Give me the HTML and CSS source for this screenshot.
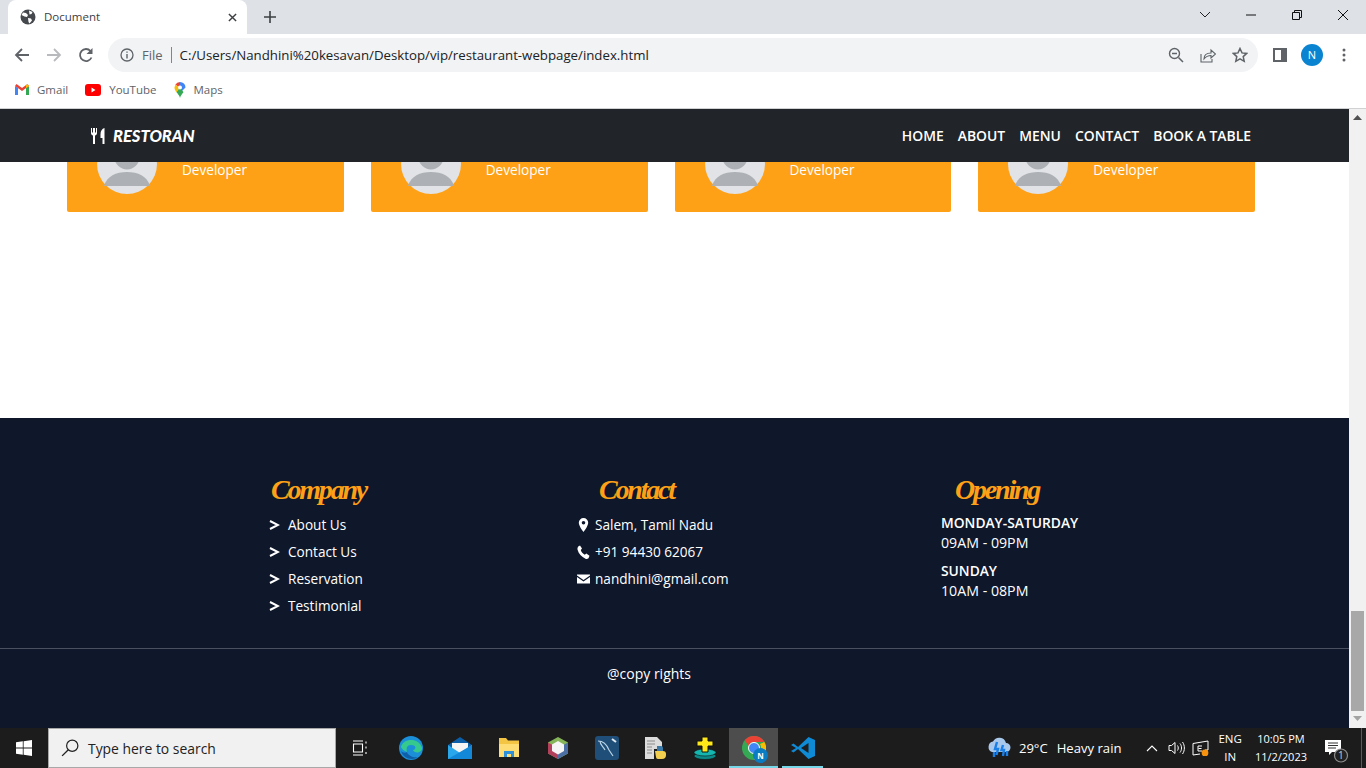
FILE: index.html
```html
<!DOCTYPE html>
<html lang="en">
<head>
    <meta charset="UTF-8">
    <title>Document</title>
    <link rel="stylesheet" href="styles.css">
</head>
<body>
    <div class="tabstrip">
        <div class="tab">
            <svg class="tab-icon" viewBox="0 0 16 16"><circle cx="8" cy="8" r="7.5" fill="#45494d"/><path d="M3 3.5l3 .5 2 2-1 2-2.5-.5L1.500 6zM9 1.500l3.500 1.500-1 2-2 .5zM8 9l3 .5 1 2-2.500 3-1-1.500z" fill="#fff"/></svg>
            <span class="tab-title">Document</span>
            <svg class="tab-close" viewBox="0 0 10 10"><path d="M1 1l8 8M9 1l-8 8" stroke="#3c4043" stroke-width="1.6"/></svg>
        </div>
        <svg class="new-tab" viewBox="0 0 12 12"><path d="M6 0v12M0 6h12" stroke="#3c4043" stroke-width="1.6"/></svg>
        <div class="window-btns">
            <svg class="win-chevron" viewBox="0 0 12 8"><path d="M1 1l5 5 5-5" fill="none" stroke="#222" stroke-width="1"/></svg>
            <svg class="win-btn" viewBox="0 0 12 12"><path d="M1 6h10" stroke="#111" stroke-width="1"/></svg>
            <svg class="win-btn" viewBox="0 0 12 12"><path d="M1.5 3.5h7v7h-7zM3.500 3.500v-2h7v7h-2" fill="none" stroke="#111" stroke-width="1"/></svg>
            <svg class="win-btn" viewBox="0 0 12 12"><path d="M1 1l10 10M11 1L1 11" stroke="#111" stroke-width="1"/></svg>
        </div>
    </div>

    <div class="toolbar">
        <svg class="nav-icon" viewBox="0 0 16 16"><path d="M15 8H2M8 2L2 8l6 6" fill="none" stroke="#5f6368" stroke-width="1.8"/></svg>
        <svg class="nav-icon" viewBox="0 0 16 16"><path d="M1 8h13M8 2l6 6-6 6" fill="none" stroke="#b8babd" stroke-width="1.8"/></svg>
        <svg class="nav-icon" viewBox="0 0 16 16"><path d="M13.5 10.5A6 6 0 1 1 12.5 4" fill="none" stroke="#5f6368" stroke-width="1.8"/><path d="M14.5 1v6h-6z" fill="#5f6368"/></svg>
        <div class="omnibox">
            <svg class="omni-info" viewBox="0 0 14 14"><circle cx="7" cy="7" r="6" fill="none" stroke="#5f6368" stroke-width="1.3"/><path d="M7 6v4.500M7 3.500v1.300" stroke="#5f6368" stroke-width="1.4"/></svg>
            <span class="omni-file">File</span>
            <span class="omni-sep"></span>
            <span class="omni-url">C:/Users/Nandhini%20kesavan/Desktop/vip/restaurant-webpage/index.html</span>
            <svg class="omni-action" viewBox="0 0 16 16"><circle cx="6.5" cy="6.5" r="5" fill="none" stroke="#5f6368" stroke-width="1.4"/><path d="M4 6.500h5M10.500 10.500l4.500 4.500" stroke="#5f6368" stroke-width="1.5"/></svg>
            <svg class="omni-action" viewBox="0 0 16 16"><path d="M1 7v8h11v-3" fill="none" stroke="#5f6368" stroke-width="1.1"/><path d="M4 12c0-4 3-6 7-6V3l4.500 4-4.500 4V8.500c-3 0-5 1-7 3.500z" fill="none" stroke="#5f6368" stroke-width="1.1"/></svg>
            <svg class="omni-action" viewBox="0 0 16 16"><path d="M8 1.500l2 4.400 4.700.5-3.500 3.200 1 4.700L8 11.900l-4.200 2.400 1-4.700L1.300 6.400 6 5.900z" fill="none" stroke="#5f6368" stroke-width="1.5"/></svg>
        </div>
        <svg class="side-icon" viewBox="0 0 14 14"><path fill-rule="evenodd" d="M0 0h14v14H0zM2 2v10h6V2z" fill="#5f6368"/></svg>
        <span class="avatar-n">N</span>
        <svg class="menu-dots" viewBox="0 0 4 14"><circle cx="2" cy="2" r="1.5" fill="#5f6368"/><circle cx="2" cy="7" r="1.5" fill="#5f6368"/><circle cx="2" cy="12" r="1.5" fill="#5f6368"/></svg>
    </div>

    <div class="bookmarks">
        <a class="bookmark">
            <svg viewBox="0 0 14 11" class="bm-gmail"><path d="M0 2v9h3V4z" fill="#4285f4"/><path d="M11 4v7h3V2z" fill="#34a853"/><path d="M0 2l7 5 7-5-1.500-2L7 4 1.500 0z" fill="#ea4335"/><path d="M12.500 0L14 2l-3 2V1.200z" fill="#fbbc04"/></svg>
            Gmail
        </a>
        <a class="bookmark">
            <svg viewBox="0 0 16 12" class="bm-yt"><rect width="16" height="12" rx="3" fill="#f00"/><path d="M6.500 3.500v5l4-2.500z" fill="#fff"/></svg>
            YouTube
        </a>
        <a class="bookmark">
            <svg viewBox="0 0 12 16" class="bm-maps"><path d="M6 0a5.500 5.500 0 0 1 5.500 5.500L6 11z" fill="#4285f4"/><path d="M6 0A5.500 5.500 0 0 0 1.300 2.700L6 5.500z" fill="#ea4335"/><path d="M.5 5.500c0 2 1 3.500 2 4.700L6 5.500 1.300 2.700z" fill="#fbbc04"/><path d="M2.500 10.200C4 12 5.500 13.500 6 16c.5-2.500 2-4 3.500-5.800L6 5.500z" fill="#34a853"/><circle cx="6" cy="5.500" r="2" fill="#fff"/></svg>
            Maps
        </a>
    </div>

    <div class="window">
        <div class="page">
            <nav class="navbar">
                <div class="brand">
                    <svg class="brand-icon" viewBox="0 0 14 16"><path d="M0 0v5c0 1.500 1 2.300 2 2.600V16h2V7.600C5 7.300 6 6.500 6 5V0H5v4.500H4V0H2v4.500H1V0zM13.500 0C11 .5 9.500 3 9.500 6.500V10h2v6h2z" fill="#fff"/></svg>
                    <span class="brand-name">RESTORAN</span>
                </div>
                <ul class="nav-links">
                    <li>HOME</li>
                    <li>ABOUT</li>
                    <li>MENU</li>
                    <li>CONTACT</li>
                    <li>BOOK A TABLE</li>
                </ul>
            </nav>

            <section class="team">
                <div class="team-card">
                    <svg class="team-photo" viewBox="0 0 60 60"><circle cx="30" cy="30" r="30" fill="#e1e3e6"/><circle cx="30" cy="23" r="12.5" fill="#adb1b5"/><path d="M7 52c3-10 12-14 23-14s20 4 23 14z" fill="#adb1b5"/></svg>
                    <span class="team-role">Developer</span>
                </div>
                <div class="team-card">
                    <svg class="team-photo" viewBox="0 0 60 60"><circle cx="30" cy="30" r="30" fill="#e1e3e6"/><circle cx="30" cy="23" r="12.5" fill="#adb1b5"/><path d="M7 52c3-10 12-14 23-14s20 4 23 14z" fill="#adb1b5"/></svg>
                    <span class="team-role">Developer</span>
                </div>
                <div class="team-card">
                    <svg class="team-photo" viewBox="0 0 60 60"><circle cx="30" cy="30" r="30" fill="#e1e3e6"/><circle cx="30" cy="23" r="12.5" fill="#adb1b5"/><path d="M7 52c3-10 12-14 23-14s20 4 23 14z" fill="#adb1b5"/></svg>
                    <span class="team-role">Developer</span>
                </div>
                <div class="team-card">
                    <svg class="team-photo" viewBox="0 0 60 60"><circle cx="30" cy="30" r="30" fill="#e1e3e6"/><circle cx="30" cy="23" r="12.5" fill="#adb1b5"/><path d="M7 52c3-10 12-14 23-14s20 4 23 14z" fill="#adb1b5"/></svg>
                    <span class="team-role">Developer</span>
                </div>
            </section>

            <footer class="footer">
                <div class="footer-cols">
                    <div class="col-company">
                        <h4 class="footer-title">Company</h4>
                        <ul class="footer-list">
                            <li><svg class="chev" viewBox="0 0 11 10"><path d="M1 1l8 4-8 4" fill="none" stroke="#fff" stroke-width="2"/></svg>About Us</li>
                            <li><svg class="chev" viewBox="0 0 11 10"><path d="M1 1l8 4-8 4" fill="none" stroke="#fff" stroke-width="2"/></svg>Contact Us</li>
                            <li><svg class="chev" viewBox="0 0 11 10"><path d="M1 1l8 4-8 4" fill="none" stroke="#fff" stroke-width="2"/></svg>Reservation</li>
                            <li><svg class="chev" viewBox="0 0 11 10"><path d="M1 1l8 4-8 4" fill="none" stroke="#fff" stroke-width="2"/></svg>Testimonial</li>
                        </ul>
                    </div>
                    <div class="col-contact">
                        <h4 class="footer-title">Contact</h4>
                        <ul class="footer-list">
                            <li><svg class="info-icon" viewBox="0 0 13 14"><path fill-rule="evenodd" d="M6.500 0a4.700 4.700 0 0 1 4.700 4.700C11.200 8 6.500 14 6.500 14S1.800 8 1.800 4.700A4.700 4.700 0 0 1 6.500 0zm0 3a1.800 1.800 0 1 0 0 3.600 1.800 1.800 0 0 0 0-3.600z" fill="#fff"/></svg>Salem, Tamil Nadu</li>
                            <li><svg class="info-icon" viewBox="0 0 13 14"><path d="M3 .5l2 3-1.200 1.500c.5 2 2 3.800 4 4.700L9.300 8.500l3.200 2.300-1 2.500c-1 .7-2 .8-3 .4C4.500 12 1.500 8.500.5 4.500c-.2-1 0-2 .7-3z" fill="#fff"/></svg>+91 94430 62067</li>
                            <li><svg class="info-icon" viewBox="0 0 13 14"><path d="M0 2.500h13v1L6.500 8 0 3.500zM0 5l6.500 4.500L13 5v6.500H0z" fill="#fff"/></svg>nandhini@gmail.com</li>
                        </ul>
                    </div>
                    <div class="col-opening">
                        <h4 class="footer-title">Opening</h4>
                        <h5 class="open-day">MONDAY-SATURDAY</h5>
                        <p class="open-time">09AM - 09PM</p>
                        <h5 class="open-day">SUNDAY</h5>
                        <p class="open-time">10AM - 08PM</p>
                    </div>
                </div>
                <div class="copy">@copy rights</div>
            </footer>
        </div>
        <div class="scrollbar">
            <svg class="scroll-arrow arrow-up" viewBox="0 0 9 5"><path d="M0 5l4.500-5L9 5z" fill="#505050"/></svg>
            <div class="scroll-track"></div>
            <div class="scroll-thumb"></div>
            <svg class="scroll-arrow arrow-down" viewBox="0 0 9 5"><path d="M0 0l4.500 5L9 0z" fill="#a3a3a3"/></svg>
        </div>
    </div>

    <div class="taskbar">
        <svg class="start" viewBox="0 0 16 16"><path d="M0 2.300l6.800-1v6.200H0zM7.600 1.200L16 0v7.500H7.600zM0 8.400h6.800v6.300L0 13.700zM7.600 8.400H16V16l-8.400-1.200z" fill="#fff"/></svg>
        <div class="search">
            <svg class="search-icon" viewBox="0 0 16 16"><circle cx="10" cy="6" r="5" fill="none" stroke="#222" stroke-width="1.1"/><path d="M6.500 9.500L1 15" stroke="#222" stroke-width="1.2"/></svg>
            <span>Type here to search</span>
        </div>
        <div class="task-icons">
            <div class="task-item"><svg class="t-small" viewBox="0 0 16 16"><path d="M1 1h10M1 15h10M1.500 4h9v8h-9zM14 1.500v2M14 6.500v2M14 12v2" fill="none" stroke="#fff" stroke-width="1.1"/></svg></div>
            <div class="task-item"><svg class="t-app" viewBox="0 0 24 24"><circle cx="12" cy="12" r="12" fill="#1b8fd8"/><path d="M2 11C4 2 20 1 23 12c.5 5-8 6-9 2 3 0 4-5-2-5-4 0-5 3-4 7C5 15 3 13 2 11z" fill="#35c98e"/><path d="M8 16c1 4 7 6 11 5-5 4-15 2-17-6 2 2 4 2 6 1z" fill="#0f5ea8"/></svg></div>
            <div class="task-item"><svg class="t-app" viewBox="0 0 24 24"><path d="M0 9L12 1l12 8v14H0z" fill="#0a5fa8"/><path d="M4 7h16v8l-8 5-8-5z" fill="#f4f4f4"/><path d="M0 9l12 8 12-8v14H0z" fill="#2aa6ea"/><path d="M24 9v14H0z" fill="#1488d8"/></svg></div>
            <div class="task-item"><svg class="t-app" viewBox="0 0 24 24"><path d="M2 2h7l2 2.500h11V21H2z" fill="#f4c542"/><path d="M2 8h20v13H2z" fill="#ffdd75"/><path d="M7 15h10v6h-3v-3h-4v3H7z" fill="#2f8fd8"/></svg></div>
            <div class="task-item"><svg class="t-app" viewBox="0 0 24 24"><path d="M12 1l10 5.500v11L12 23 2 17.500v-11z" fill="#85b558"/><path d="M2 6.500L12 12v11L2 17.500z" fill="#b3405a"/><path d="M12 12l10-5.500v11L12 23z" fill="#4b6fa5"/><path d="M12 5l6 3.500v6.500l-6 3.500-6-3.500V8.500z" fill="#f5f5f5"/></svg></div>
            <div class="task-item"><svg class="t-app" viewBox="0 0 24 24"><rect width="24" height="24" rx="3" fill="#1f4e78"/><path d="M3 5c6 0 9 4 11 9l4 6M5 5c0 4 3 5 5 9" fill="none" stroke="#b9d3e6" stroke-width="1.2"/><path d="M17 3l4 3" stroke="#dfe9f1" stroke-width="2"/></svg></div>
            <div class="task-item"><svg class="t-app" viewBox="0 0 24 24"><path d="M1 1h12l5 5v7H10v10H1z" fill="#dcdcdc"/><path d="M3 5h8M3 8h8M3 11h5M3 14h5M3 17h5" stroke="#8a8a8a"/><path d="M13 10h4a2 2 0 0 1 2 2v3h-6z" fill="#3a78a8"/><path d="M11 15h8a3 3 0 0 1 3 3v1a4 4 0 0 1-4 4h-4a2 2 0 0 1-2-2z" fill="#f2cf4f"/></svg></div>
            <div class="task-item"><svg class="t-app" viewBox="0 0 24 24"><ellipse cx="12" cy="20" rx="11" ry="3.500" fill="#0b8a8a" stroke="#111" stroke-width=".6"/><ellipse cx="12" cy="16.500" rx="11" ry="3.500" fill="#16b6b0" stroke="#111" stroke-width=".6"/><path d="M9 1h6v4h5v5h-5v6H9v-6H4V5h5z" fill="#ffe81a" stroke="#111"/></svg></div>
            <div class="task-item task-active">
                <svg class="t-app" viewBox="0 0 24 24"><circle cx="12" cy="12" r="12" fill="#34a853"/><path d="M12 0a12 12 0 0 1 10.400 6H12a6 6 0 0 0-5.600 3.800L2.700 4.300A12 12 0 0 1 12 0z" fill="#ea4335"/><path d="M22.400 6A12 12 0 0 1 12 24l5-8.500A6 6 0 0 0 18 8z" fill="#fbbc04"/><circle cx="12" cy="12" r="5.500" fill="#4285f4" stroke="#fff"/></svg>
                <span class="chrome-badge">N</span>
            </div>
            <div class="task-item task-open"><svg class="t-app" viewBox="0 0 24 24"><path d="M17.500 1L24 4v16l-6.500 3L7 13l-4.500 3.500L0 15l5-3-5-3 2.500-1.500L7 11z" fill="#0f8ad4"/><path d="M17.500 7L10 12l7.500 5z" fill="#1f1f1f"/></svg></div>
        </div>
        <div class="tray">
            <svg class="weather-icon" viewBox="0 0 26 22"><path d="M6 15a5.500 5.500 0 0 1 1-10.500A7 7 0 0 1 20 6a4.500 4.500 0 0 1 0 9z" fill="#a8c8ec"/><path d="M11 5l-2 7h3l-1.500 6M17 8l-1.500 5h2.500L17 19M8 15v5M21 14v5" fill="none" stroke="#1a7fe6" stroke-width="2.4"/></svg>
            <span class="weather-text">29°C</span>
            <span class="weather-text">Heavy rain</span>
            <svg class="tray-chev" viewBox="0 0 12 7"><path d="M1 6l5-5 5 5" fill="none" stroke="#fff" stroke-width="1.1"/></svg>
            <svg class="tray-sound" viewBox="0 0 17 16"><path d="M1 5.500h2.500L7 2.500v11l-3.500-3H1z" fill="none" stroke="#fff"/><path d="M9.500 5.500c1 1.500 1 3.500 0 5M12 3.500c2 2.500 2 6.500 0 9M14.500 2c2.500 3.500 2.500 8.500 0 12" fill="none" stroke="#fff"/></svg>
            <svg class="tray-net" viewBox="0 0 17 16"><path d="M1 3.500L16 1v9h-3M1 3.500V15l7-1" fill="none" stroke="#fff"/><path d="M10 6H6v5h4M6.500 8.500h3" fill="none" stroke="#fff"/><circle cx="13" cy="13" r="3.400" fill="#f7930e"/></svg>
            <div class="tray-lang"><span>ENG</span><span>IN</span></div>
            <div class="tray-clock"><span>10:05 PM</span><span>11/2/2023</span></div>
            <span class="notify">
                <svg viewBox="0 0 26 30"><path d="M1 7h16v12H8l-3 3v-3H1z" fill="#fff"/><path d="M4 10h10M4 12.500h10M4 15h8" stroke="#333"/><circle cx="17" cy="22.500" r="6.500" fill="#222" stroke="#8f8f8f" stroke-width="1.2"/></svg>
                <span class="notify-num">1</span>
            </span>
            <span class="show-desktop"></span>
        </div>
    </div>
</body>
</html>
```

FILE: styles.css
```css
* {
    box-sizing: border-box;
}
html, body {
    height: 100%;
}
body {
    margin: 0;
    height: 768px;
    overflow: hidden;
    display: flex;
    flex-direction: column;
    font-family: "Open Sans", "Noto Sans", sans-serif;
    background: #fff;
}

/* browser chrome */
.tabstrip {
    height: 34px;
    flex: none;
    display: flex;
    align-items: center;
    background: #dee1e6;
    padding-left: 8px;
}
.tab {
    width: 239px;
    height: 34px;
    padding: 0 10px 0 12px;
    display: flex;
    align-items: center;
    background: #fff;
    border-radius: 8px 8px 0 0;
}
.tab-icon {
    width: 16px;
    height: 16px;
    margin-right: 8px;
}
.tab-title {
    flex: 1;
    font-size: 11.5px;
    line-height: 14px;
    margin-bottom: 1px;
    color: #3c4043;
}
.tab-close {
    width: 9px;
    height: 9px;
}
.new-tab {
    width: 12px;
    height: 12px;
    margin-left: 17px;
}
.window-btns {
    margin-left: auto;
    display: flex;
    align-items: center;
    padding-right: 17px;
    margin-top: -5px;
}
.win-chevron {
    width: 12px;
    height: 8px;
}
.win-btn {
    width: 12px;
    height: 12px;
    margin-left: 34px;
}

.toolbar {
    height: 40px;
    flex: none;
    display: flex;
    align-items: center;
    padding: 4px 0 2px 14px;
    background: #fff;
}
.nav-icon {
    width: 16px;
    height: 16px;
    margin-right: 16px;
}
.omnibox {
    width: 1150px;
    height: 34px;
    margin-left: -2px;
    padding: 0 10px 0 12px;
    display: flex;
    align-items: center;
    background: #f1f3f4;
    border-radius: 17px;
}
.omni-info {
    width: 14px;
    height: 14px;
    margin-right: 8px;
}
.omni-file {
    font-size: 13px;
    color: #5f6368;
}
.omni-sep {
    width: 1px;
    height: 16px;
    margin: 0 8px;
    background: #80868b;
}
.omni-url {
    flex: 1;
    font-size: 13.25px;
    color: #202124;
    white-space: nowrap;
}
.omni-action {
    width: 16px;
    height: 16px;
    margin-left: 16px;
}
.side-icon {
    width: 14px;
    height: 14px;
    margin-left: 15px;
}
.avatar-n {
    width: 22px;
    height: 22px;
    margin-left: 14px;
    border-radius: 50%;
    background: #0a84d0;
    color: #fff;
    font-size: 11px;
    line-height: 22px;
    text-align: center;
}
.menu-dots {
    width: 4px;
    height: 14px;
    margin-left: 19px;
}

.bookmarks {
    height: 35px;
    flex: none;
    display: flex;
    align-items: center;
    padding: 0 0 3px 15px;
    gap: 17px;
    background: #fff;
    border-bottom: 1px solid #d0d1d3;
}
.bookmark {
    display: flex;
    align-items: center;
    gap: 8px;
    font-size: 11.5px;
    color: #5f6368;
}
.bm-gmail {
    width: 14px;
    height: 11px;
}
.bm-yt {
    width: 16px;
    height: 12px;
}
.bm-maps {
    width: 12px;
    height: 16px;
}

/* the page in the window */
.window {
    flex: 1;
    display: flex;
    min-height: 0;
}
.page {
    flex: 1;
    position: relative;
    overflow: hidden;
    display: flex;
    flex-direction: column;
}
.navbar {
    position: absolute;
    top: 0;
    left: 0;
    right: 0;
    height: 53px;
    padding: 0 98px 0 91px;
    display: flex;
    align-items: center;
    justify-content: space-between;
    background: #212529;
    z-index: 2;
}
.brand {
    display: flex;
    align-items: center;
    gap: 8px;
}
.brand-icon {
    width: 14px;
    height: 16px;
}
.brand-name {
    font-family: Lato, sans-serif;
    font-size: 16.5px;
    font-weight: 900;
    font-style: italic;
    color: #fff;
}
.nav-links {
    display: flex;
    gap: 14px;
    list-style: none;
    margin: 0;
    padding: 0;
    font-size: 13.9px;
    font-weight: 600;
    color: #fff;
}
.team {
    height: 309px;
    flex: none;
    padding: 7px 94px 0 67px;
    display: grid;
    grid-template-columns: repeat(4, 1fr);
    column-gap: 27px;
    align-items: start;
}
.team-card {
    height: 96px;
    padding: 18px 0 18px 30px;
    display: flex;
    background: #fea116;
    border-radius: 2px;
}
.team-photo {
    width: 60px;
    height: 60px;
    flex: none;
}
.team-role {
    margin: 26px 0 0 25px;
    font-size: 13.6px;
    line-height: 20px;
    color: #fff;
}

.footer {
    flex: 1;
    background: #0f172b;
    display: flex;
    flex-direction: column;
    color: #fff;
}
.footer-cols {
    height: 231px;
    flex: none;
    display: flex;
    padding: 53px 0 0 269px;
    border-bottom: 1px solid #4a5060;
}
.footer-title {
    margin: 0;
    height: 40px;
    font-family: "Liberation Serif", serif;
    font-size: 28px;
    line-height: 38px;
    letter-spacing: -2.2px;
    font-weight: 700;
    font-style: italic;
    color: #fea116;
}
.col-company {
    width: 308px;
}
.col-company .footer-title {
    padding-left: 2px;
}
.col-contact {
    width: 364px;
}
.col-contact .footer-title {
    padding-left: 22px;
}
.col-opening .footer-title {
    padding-left: 14px;
    margin-bottom: 2px;
}
.footer-list {
    list-style: none;
    margin: 0;
    padding: 0;
    font-size: 13.6px;
}
.footer-list li {
    height: 27px;
    display: flex;
    align-items: center;
}
.chev {
    width: 11px;
    height: 10px;
    margin-right: 8px;
}
.info-icon {
    width: 13px;
    height: 14px;
    margin-right: 5px;
}
.open-day {
    margin: 0;
    font-size: 13.8px;
    font-weight: 600;
    line-height: 20px;
}
.open-time {
    margin: 0 0 8px;
    font-size: 14.2px;
    line-height: 20px;
}
.copy {
    padding: 15px 0 0 607px;
    font-size: 14px;
    line-height: 20px;
}

.scrollbar {
    width: 17px;
    flex: none;
    display: flex;
    flex-direction: column;
    align-items: center;
    background: #f1f1f1;
}
.scroll-arrow {
    width: 9px;
    height: 5px;
    flex: none;
}
.arrow-up {
    margin: 6px 0;
}
.arrow-down {
    margin: 5px 0 7px;
}
.scroll-track {
    flex: 1;
}
.scroll-thumb {
    width: 13px;
    height: 100px;
    flex: none;
    background: #a8a8a8;
}

/* windows taskbar */
.taskbar {
    height: 40px;
    flex: none;
    display: flex;
    align-items: center;
    background: #1c1c1c;
    color: #fff;
}
.start {
    width: 16px;
    height: 16px;
    margin: 0 16px;
}
.search {
    width: 288px;
    height: 40px;
    padding-left: 12px;
    display: flex;
    align-items: center;
    gap: 9px;
    background: #f1f1f1;
    border: 1px solid #a8a8a8;
    font-size: 13.9px;
    color: #222;
}
.search-icon {
    width: 18px;
    height: 18px;
}
.task-icons {
    display: flex;
    margin-left: 1px;
}
.task-item {
    width: 49px;
    height: 40px;
    display: flex;
    align-items: center;
    justify-content: center;
    position: relative;
}
.task-active {
    background: #4d4d4d;
}
.task-active::after, .task-open::after {
    content: "";
    position: absolute;
    left: 0;
    right: 0;
    bottom: 0;
    height: 2px;
    background: #76d7e8;
}
.task-open::after {
    left: 4px;
    right: 4px;
}
.t-small {
    width: 16px;
    height: 16px;
    margin-right: 4px;
}
.t-app {
    width: 24px;
    height: 24px;
}
.chrome-badge {
    position: absolute;
    right: 10px;
    bottom: 5px;
    width: 15px;
    height: 15px;
    border-radius: 50%;
    background: #0a7cc4;
    font-size: 8px;
    font-weight: 700;
    line-height: 15px;
    text-align: center;
}
.tray {
    margin-left: auto;
    display: flex;
    align-items: center;
    font-size: 13.1px;
}
.weather-icon {
    width: 26px;
    height: 22px;
    margin-right: 7px;
}
.weather-text {
    margin-right: 9px;
}
.tray-chev {
    width: 12px;
    height: 7px;
    margin-left: 16px;
}
.tray-sound {
    width: 17px;
    height: 16px;
    margin-left: 10px;
}
.tray-net {
    width: 17px;
    height: 16px;
    margin-left: 7px;
}
.tray-lang {
    margin-left: 9px;
    display: flex;
    flex-direction: column;
    align-items: center;
    font-size: 11.5px;
    line-height: 18px;
}
.tray-clock {
    margin-left: 13px;
    display: flex;
    flex-direction: column;
    align-items: center;
    font-size: 11px;
    line-height: 18px;
}
.notify {
    width: 26px;
    height: 30px;
    margin: 0 11px 0 17px;
    position: relative;
}
.notify svg {
    display: block;
}
.notify-num {
    position: absolute;
    left: 14px;
    top: 15px;
    font-size: 10px;
    line-height: 14px;
    color: #ccc;
}
.show-desktop {
    width: 1px;
    height: 40px;
    margin-right: 4px;
    background: #5a5a5a;
}
```
